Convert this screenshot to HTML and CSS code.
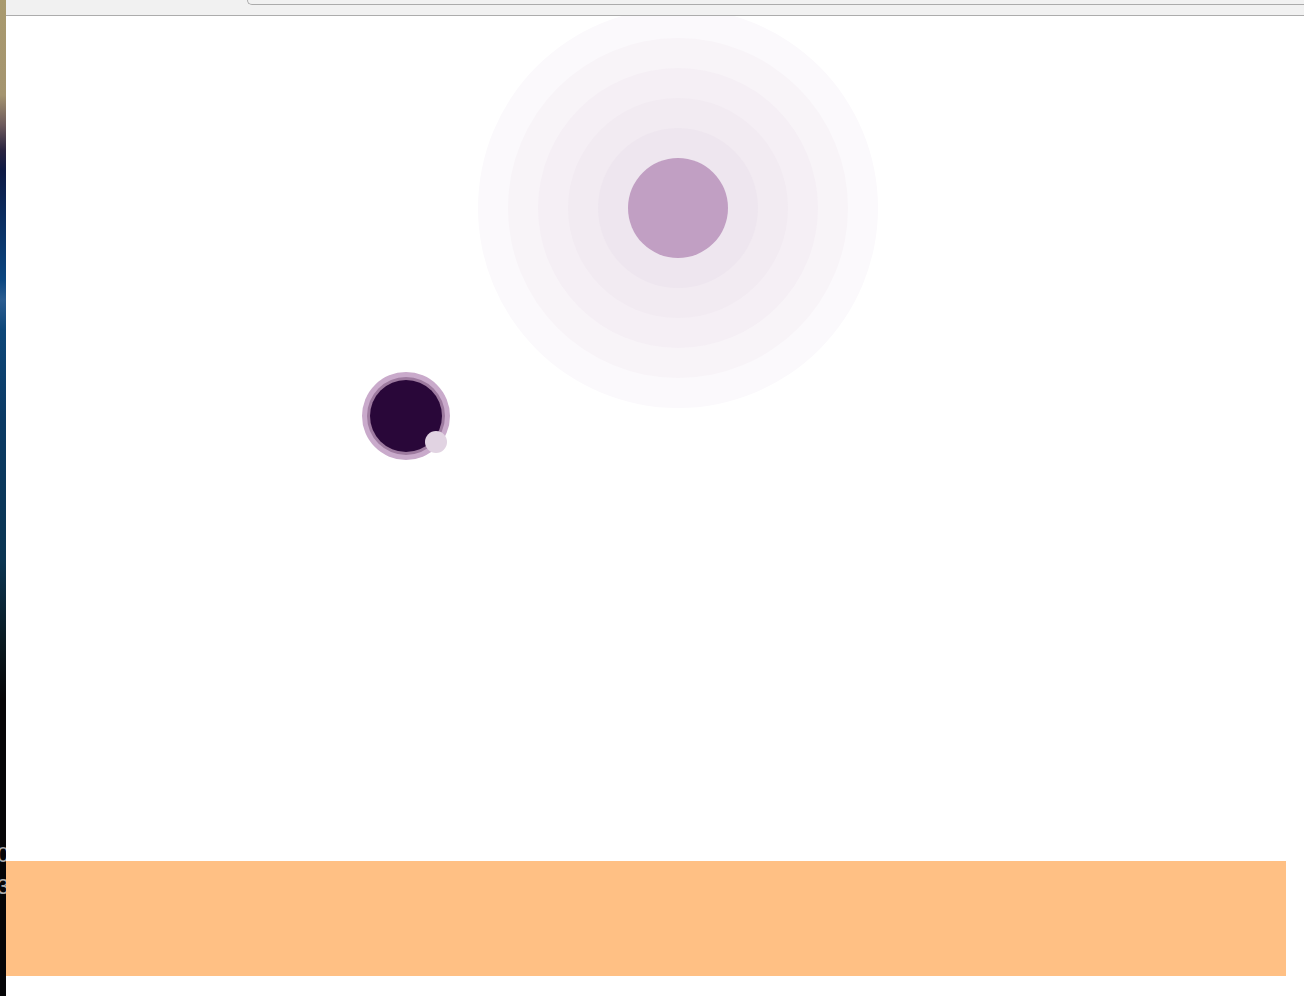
FILE: index.html
```html
<!DOCTYPE html>
<html lang="en">
<head>
<meta charset="utf-8">
<title>Pulse</title>
<link rel="stylesheet" href="styles.css">
</head>
<body>
<div class="window">
  <aside class="wallpaper">
    <span class="desk-label first">0</span>
    <span class="desk-label">3</span>
  </aside>
  <div class="browser">
    <div class="chrome">
      <div class="tab"></div>
    </div>
    <main class="page">
      <div class="stage">
        <div class="pulse">
          <div class="ring r2">
            <div class="ring r3">
              <div class="ring r4">
                <div class="ring r5">
                  <div class="core"></div>
                </div>
              </div>
            </div>
          </div>
        </div>
        <div class="marker">
          <div class="marker-mid">
            <div class="marker-core"></div>
          </div>
          <span class="marker-dot"></span>
        </div>
      </div>
      <footer class="bar"></footer>
    </main>
  </div>
</div>
</body>
</html>
```
FILE: styles.css
```css
html, body {
  margin: 0;
  padding: 0;
  background: #ffffff;
  font-family: "Liberation Sans", Arial, sans-serif;
}

.window {
  display: grid;
  grid-template-columns: 6px 1fr;
  height: 996px;
  overflow: hidden;
}

.wallpaper {
  display: flex;
  flex-direction: column;
  background: linear-gradient(to bottom,
    #a99a6e 0px,
    #a4946f 95px,
    #6d5a5c 125px,
    #2a2440 150px,
    #0e1a44 170px,
    #0b2a5c 210px,
    #0b4680 280px,
    #2a5c90 300px,
    #0d4678 330px,
    #0b3a64 420px,
    #0b3552 560px,
    #0a1a22 640px,
    #060507 700px,
    #050507 996px);
  overflow: hidden;
}

.desk-label {
  color: #a9a9a9;
  font-size: 22px;
  line-height: 32px;
  margin-left: -3px;
}

.desk-label.first {
  margin-top: 839px;
}

.browser {
  display: flex;
  flex-direction: column;
  min-width: 0;
}

.chrome {
  height: 15px;
  background: #f1f1f1;
  border-bottom: 1px solid #acacac;
  display: flex;
  align-items: flex-start;
}

.tab {
  margin-left: 241px;
  flex: 1;
  height: 5px;
  border-bottom: 1px solid #ababab;
  border-left: 1px solid #ababab;
  border-bottom-left-radius: 8px;
  box-sizing: border-box;
}

.page {
  flex: 1;
  display: flex;
  flex-direction: column;
}

.stage {
  position: relative;
  flex: 1;
  overflow: hidden;
}

.pulse {
  position: absolute;
  left: 472px;
  top: -8px;
  width: 400px;
  height: 400px;
  box-sizing: border-box;
  padding: 30px;
  border-radius: 50%;
  background: #fbf9fc;
}

.ring {
  width: 100%;
  height: 100%;
  box-sizing: border-box;
  padding: 30px;
  border-radius: 50%;
}

.r2 { background: #f8f4f8; }
.r3 { background: #f5eff5; }
.r4 { background: #f2ebf2; }
.r5 { background: #eee6ef; }

.core {
  width: 100%;
  height: 100%;
  border-radius: 50%;
  background: #c19fc3;
}

.marker {
  position: absolute;
  left: 356px;
  top: 356px;
  width: 88px;
  height: 88px;
  box-sizing: border-box;
  padding: 5px;
  border-radius: 50%;
  background: #c9aacb;
}

.marker-mid {
  width: 100%;
  height: 100%;
  box-sizing: border-box;
  padding: 3px;
  border-radius: 50%;
  background: #9d7a9f;
}

.marker-core {
  width: 100%;
  height: 100%;
  border-radius: 50%;
  background: #290739;
}

.marker-dot {
  position: absolute;
  left: 63px;
  top: 59px;
  width: 22px;
  height: 22px;
  border-radius: 50%;
  background: #e1d3e2;
}

.bar {
  height: 115px;
  margin: 0 18px 20px 0;
  background: #ffc084;
}
```
